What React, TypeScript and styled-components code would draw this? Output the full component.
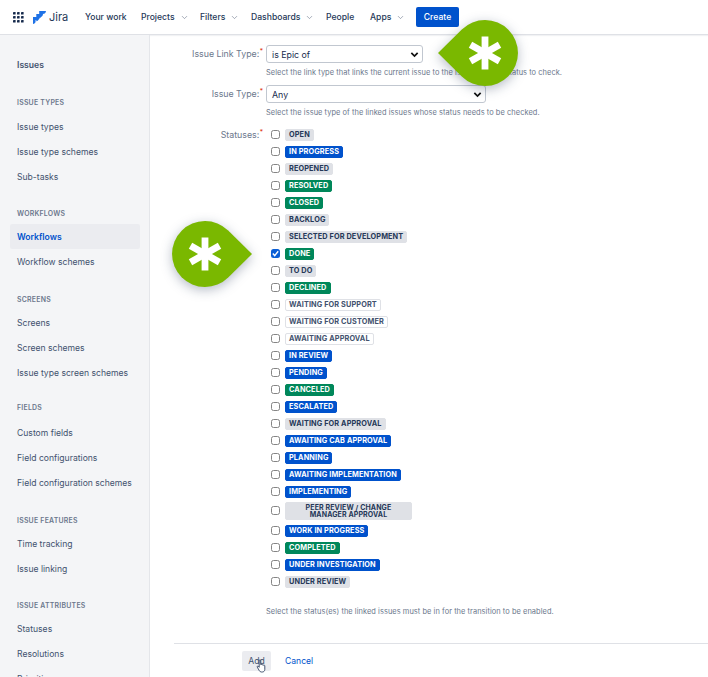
import React from 'react';
import styled, { createGlobalStyle } from 'styled-components';
import { ChevronDown } from 'lucide-react';

const GlobalStyle = createGlobalStyle`
  html, body {
    margin: 0;
    padding: 0;
    background: #fff;
  }
  body {
    font-family: Inter, "Liberation Sans", sans-serif;
    color: #172b4d;
    overflow: hidden;
  }
`;

const Page = styled.div`
  width: 708px;
  height: 677px;
  position: relative;
  overflow: hidden;
  display: flex;
  flex-direction: column;
`;

const TopBar = styled.header`
  height: 34px;
  flex: none;
  display: flex;
  align-items: center;
  padding-left: 13px;
  border-bottom: 1px solid #dfe1e6;
  box-shadow: 0 1px 1px rgba(9, 30, 66, 0.06);
`;

const Brand = styled.div`
  display: flex;
  align-items: center;
  width: 52px;
  gap: 3px;
  margin-left: 9px;
  font-size: 11px;
  color: #253858;
`;

const NavItem = styled.span<{ $w: number }>`
  width: ${(p) => p.$w}px;
  flex: none;
  display: flex;
  align-items: center;
  gap: 5px;
  font-size: 8.6px;
  font-weight: 500;
  color: #253858;
  white-space: nowrap;
`;

const CreateButton = styled.button`
  width: 43px;
  height: 20px;
  border: 0;
  border-radius: 2px;
  padding: 0;
  background: #0052cc;
  color: #fff;
  font: 500 8.6px Inter, "Liberation Sans", sans-serif;
`;

const Body = styled.div`
  flex: 1;
  min-height: 0;
  display: flex;
`;

const Sidebar = styled.aside`
  width: 150px;
  flex: none;
  background: #f4f5f7;
  border-right: 1px solid #e4e6ea;
  padding: 0 10px;
  box-sizing: border-box;
  overflow: hidden;
`;

const SideTitle = styled.div`
  height: 25px;
  margin-top: 17px;
  padding-left: 7px;
  display: flex;
  align-items: center;
  font-size: 8.6px;
  font-weight: 600;
  color: #42526e;
`;

const SideHeading = styled.div<{ $top?: number; $bottom?: number }>`
  height: 22px;
  margin-top: ${(p) => p.$top ?? 14}px;
  margin-bottom: ${(p) => p.$bottom ?? 0}px;
  padding-left: 7px;
  display: flex;
  align-items: center;
  font-size: 6.9px;
  font-weight: 600;
  letter-spacing: 0.25px;
  color: #6b778c;
`;

const SideLink = styled.div<{ $active?: boolean }>`
  height: 25px;
  width: 130px;
  padding-left: 7px;
  box-sizing: border-box;
  display: flex;
  align-items: center;
  font-size: 8.6px;
  white-space: nowrap;
  border-radius: 2px;
  color: ${(p) => (p.$active ? '#0052cc' : '#42526e')};
  font-weight: ${(p) => (p.$active ? 600 : 400)};
  background: ${(p) => (p.$active ? '#ebecf0' : 'transparent')};
`;

const Main = styled.main`
  flex: 1;
  min-width: 0;
  display: flex;
  flex-direction: column;
  padding-top: 10px;
`;

const Field = styled.div<{ $height: number }>`
  display: grid;
  grid-template-columns: 111px 1fr;
  column-gap: 5px;
  height: ${(p) => p.$height}px;
`;

const Label = styled.label`
  font-size: 8.8px;
  color: #6b778c;
  text-align: right;
  line-height: 18px;
  white-space: nowrap;
`;

const Req = styled.sup`
  color: #de350b;
  font-size: 6.5px;
  line-height: 0;
  margin-left: 0.5px;
  margin-right: -2px;
`;

const Select = styled.div<{ $w: number }>`
  width: ${(p) => p.$w}px;
  height: 18px;
  box-sizing: border-box;
  border: 1px solid #c1c7d0;
  border-radius: 3px;
  padding: 0 3px 0 5px;
  display: flex;
  align-items: center;
  justify-content: space-between;
  font-size: 8.8px;
  color: #172b4d;
  background: #fff;
`;

const Hint = styled.div<{ $top?: number }>`
  margin-top: ${(p) => p.$top ?? 5}px;
  font-size: 7.45px;
  line-height: 10px;
  letter-spacing: 0.05px;
  color: #6b778c;
  white-space: nowrap;
`;

const StatusList = styled.div`
  display: flex;
  flex-direction: column;
`;

const StatusRow = styled.div<{ $height?: number }>`
  height: ${(p) => p.$height ?? 17}px;
  display: flex;
  align-items: center;
  padding-left: 5px;
  gap: 5px;
`;

const Check = styled.span<{ $on?: boolean }>`
  width: 9px;
  height: 9px;
  flex: none;
  box-sizing: border-box;
  border-radius: 2.5px;
  border: ${(p) => (p.$on ? '0' : '1px solid #858585')};
  background: ${(p) => (p.$on ? '#0b5fd6' : '#fff')};
  display: flex;
  margin-top: -1px;
`;

const palette = {
  blue: { bg: '#0052cc', fg: '#fff', bd: '#0052cc' },
  green: { bg: '#00875a', fg: '#fff', bd: '#00875a' },
  grey: { bg: '#dfe1e6', fg: '#253858', bd: '#dfe1e6' },
  outline: { bg: '#fff', fg: '#42526e', bd: '#dfe1e6' },
};

type Tone = keyof typeof palette;

const Lozenge = styled.span<{ $tone: Tone; $wide?: boolean }>`
  display: inline-block;
  box-sizing: border-box;
  padding: ${(p) => (p.$wide ? '1px 12px' : '0 3px')};
  width: ${(p) => (p.$wide ? '127px' : 'auto')};
  border-radius: 2px;
  border: 1px solid ${(p) => palette[p.$tone].bd};
  background: ${(p) => palette[p.$tone].bg};
  color: ${(p) => palette[p.$tone].fg};
  font-size: ${(p) => (p.$wide ? '7px' : '7.3px')};
  font-weight: 700;
  letter-spacing: 0.12px;
  line-height: ${(p) => (p.$wide ? '7px' : '10px')};
  text-align: center;
  text-transform: uppercase;
  white-space: ${(p) => (p.$wide ? 'normal' : 'nowrap')};
`;

const Footer = styled.div`
  margin-left: 24px;
  margin-top: 21px;
  border-top: 1px solid #dfe1e6;
  padding: 7px 0 0 68px;
  display: flex;
  align-items: center;
  gap: 14px;
  position: relative;
`;

const AddButton = styled.button`
  width: 29px;
  height: 20px;
  border: 0;
  border-radius: 2px;
  padding: 0;
  background: #ebecf0;
  color: #42526e;
  font: 400 8.6px Inter, "Liberation Sans", sans-serif;
`;

const CancelLink = styled.span`
  font-size: 8.6px;
  color: #0052cc;
`;

const Cursor = styled.svg`
  position: absolute;
  left: 82px;
  top: 15px;
`;

const Callout = styled.svg<{ $x: number; $y: number }>`
  position: absolute;
  left: ${(p) => p.$x}px;
  top: ${(p) => p.$y}px;
  overflow: visible;
  filter: drop-shadow(0 3px 6px rgba(9, 30, 66, 0.3));
`;

const Chevron = () => <ChevronDown size={9} strokeWidth={1.6} color="#6b778c" />;

const SelectArrow = () => (
  <svg width="9" height="9" viewBox="0 0 10 10" fill="none">
    <path d="M1.5 3.2 5 6.8l3.5-3.6" stroke="#111" strokeWidth="1.9" />
  </svg>
);

const GridIcon = () => (
  <svg width="11" height="11" viewBox="0 0 11 11" fill="#172b4d">
    {[0, 4, 8].flatMap((y) =>
      [0, 4, 8].map((x) => <rect key={`${x}-${y}`} x={x} y={y} width="2.6" height="2.6" rx="0.4" />)
    )}
  </svg>
);

const JiraMark = () => (
  <svg width="13" height="13" viewBox="0 0 13 13" fill="#1f72e6">
    <path d="M6.2 0H13c0 1.8-1.4 3.2-3.2 3.2H8.7v1.1C8.7 6 7.4 7.4 6.2 7.5V0Z" transform="translate(0 -0.2)" />
    <path d="M3.3 3H10c0 1.7-1.4 3-3.1 3H5.8v1.2c0 1.7-1.3 3-2.5 3.1V3Z" />
    <path d="M0 6h6.8c0 1.7-1.4 3.1-3.1 3.1H2.6v1.1C2.6 12 1.3 13 0 13V6Z" />
  </svg>
);

const Marker = ({ x, y, flip }: { x: number; y: number; flip?: boolean }) => (
  <Callout $x={x} $y={y} width="82" height="68" viewBox="0 0 82 68">
    <path
      d={
        flip
          ? 'M82 34 L58.2 10.5 A33 33 0 1 0 58.2 57.5 Z'
          : 'M0 34 L23.8 10.5 A33 33 0 1 1 23.8 57.5 Z'
      }
      fill="#7ab800"
    />
    <g stroke="#fff" strokeWidth="6.8" transform={`translate(${flip ? 35 : 47} 34)`}>
      <path d="M0 -16.5V16.5" />
      <path d="M-14.5 -8.2 14.5 8.2" />
      <path d="M-14.5 8.2 14.5 -8.2" />
    </g>
  </Callout>
);

const sections: { heading: string; top?: number; bottom?: number; links: string[] }[] = [
  { heading: 'Issue types', top: 14, bottom: 1, links: ['Issue types', 'Issue type schemes', 'Sub-tasks'] },
  { heading: 'Workflows', top: 13, links: ['Workflows', 'Workflow schemes'] },
  { heading: 'Screens', links: ['Screens', 'Screen schemes', 'Issue type screen schemes'] },
  { heading: 'Fields', top: 11, bottom: 2, links: ['Custom fields', 'Field configurations', 'Field configuration schemes'] },
  { heading: 'Issue features', links: ['Time tracking', 'Issue linking'] },
  { heading: 'Issue attributes', top: 13, links: ['Statuses', 'Resolutions', 'Priorities'] },
];

const statuses: [string, Tone][] = [
  ['Open', 'grey'],
  ['In progress', 'blue'],
  ['Reopened', 'grey'],
  ['Resolved', 'green'],
  ['Closed', 'green'],
  ['Backlog', 'grey'],
  ['Selected for development', 'grey'],
  ['Done', 'green'],
  ['To do', 'grey'],
  ['Declined', 'green'],
  ['Waiting for support', 'outline'],
  ['Waiting for customer', 'outline'],
  ['Awaiting approval', 'outline'],
  ['In review', 'blue'],
  ['Pending', 'blue'],
  ['Canceled', 'green'],
  ['Escalated', 'blue'],
  ['Waiting for approval', 'grey'],
  ['Awaiting CAB approval', 'blue'],
  ['Planning', 'blue'],
  ['Awaiting implementation', 'blue'],
  ['Implementing', 'blue'],
  ['Peer review / change manager approval', 'grey'],
  ['Work in progress', 'blue'],
  ['Completed', 'green'],
  ['Under investigation', 'blue'],
  ['Under review', 'grey'],
];

export default function App() {
  return (
    <Page>
      <GlobalStyle />
      <TopBar>
        <GridIcon />
        <Brand>
          <JiraMark />
          Jira
        </Brand>
        <NavItem $w={56}>Your work</NavItem>
        <NavItem $w={59}>Projects <Chevron /></NavItem>
        <NavItem $w={51}>Filters <Chevron /></NavItem>
        <NavItem $w={75}>Dashboards <Chevron /></NavItem>
        <NavItem $w={44}>People</NavItem>
        <NavItem $w={46}>Apps <Chevron /></NavItem>
        <CreateButton>Create</CreateButton>
      </TopBar>
      <Body>
        <Sidebar>
          <SideTitle>Issues</SideTitle>
          {sections.map((s) => (
            <React.Fragment key={s.heading}>
              <SideHeading $top={s.top} $bottom={s.bottom}>{s.heading.toUpperCase()}</SideHeading>
              {s.links.map((l) => (
                <SideLink key={l} $active={l === 'Workflows'}>{l}</SideLink>
              ))}
            </React.Fragment>
          ))}
        </Sidebar>
        <Main>
          <Field $height={40}>
            <Label>Issue Link Type:<Req>*</Req></Label>
            <div>
              <Select $w={157}>is Epic of <SelectArrow /></Select>
              <Hint>Select the link type that links the current issue to the issues whose status to check.</Hint>
            </div>
          </Field>
          <Field $height={41}>
            <Label>Issue Type:<Req>*</Req></Label>
            <div>
              <Select $w={220}>Any <SelectArrow /></Select>
              <Hint>Select the issue type of the linked issues whose status needs to be checked.</Hint>
            </div>
          </Field>
          <Field $height={496}>
            <Label>Statuses:<Req>*</Req></Label>
            <div>
              <StatusList>
                {statuses.map(([name, tone]) => {
                  const wide = name.startsWith('Peer');
                  return (
                    <StatusRow key={name} $height={wide ? 22 : 17}>
                      <Check $on={name === 'Done'}>
                        {name === 'Done' && (
                          <svg width="9" height="9" viewBox="0 0 9 9" fill="none">
                            <path d="M1.8 4.6 3.7 6.6 7.2 2.3" stroke="#fff" strokeWidth="1.4" />
                          </svg>
                        )}
                      </Check>
                      <Lozenge $tone={tone} $wide={wide}>{name}</Lozenge>
                    </StatusRow>
                  );
                })}
              </StatusList>
              <Hint $top={17}>Select the status(es) the linked issues must be in for the transition to be enabled.</Hint>
            </div>
          </Field>
          <Footer>
            <AddButton>Add</AddButton>
            <CancelLink>Cancel</CancelLink>
            <Cursor width="12" height="14" viewBox="0 0 12 14">
              <path
                d="M3.2 1.6c0-1 1.5-1 1.5 0v4l.3-.1c.5-.3 1.1 0 1.2.3.5-.3 1.1 0 1.3.4.5-.3 1.2 0 1.3.6v3.6c0 1.5-1 2.6-2.5 2.6H5.4c-.9 0-1.5-.4-2-1.2L1.3 8.2c-.5-.9.6-1.6 1.2-.8l.7.9V1.6Z"
                fill="#fff"
                stroke="#172b4d"
                strokeWidth="0.8"
              />
            </Cursor>
          </Footer>
        </Main>
      </Body>
      <Marker x={438} y={19} />
      <Marker x={170} y={220} flip />
    </Page>
  );
}
